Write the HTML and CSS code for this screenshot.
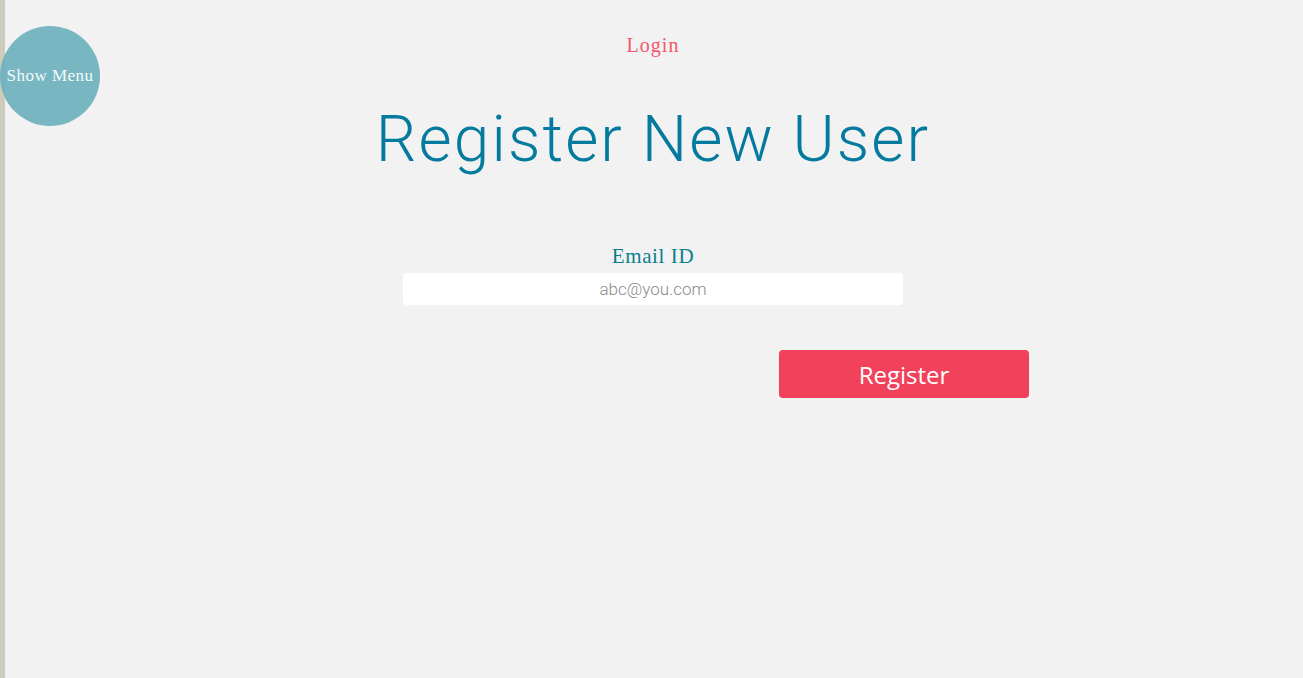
FILE: index.html
```html
<!DOCTYPE html>
<html>
<head>
<meta charset="utf-8">
<link rel="stylesheet" href="styles.css">
</head>
<body>
<div class="page">
  <button class="menu-toggle">Show Menu</button>
  <main class="content">
    <a class="login-link" href="#">Login</a>
    <h1 class="title">Register New User</h1>
    <form class="form">
      <label class="field-label" for="email">Email ID</label>
      <input class="field-input" id="email" type="text" placeholder="abc@you.com">
      <div class="actions">
        <button class="register-btn" type="button">Register</button>
      </div>
    </form>
  </main>
</div>
</body>
</html>
```
FILE: styles.css
```css
html, body {
  margin: 0;
  padding: 0;
  height: 100%;
}
body {
  background: #f2f2f2;
  font-family: "Liberation Serif", serif;
}
.page {
  min-height: 100%;
  border-left: 5px solid #cccdbf;
  box-sizing: border-box;
}
.menu-toggle {
  position: absolute;
  left: 0;
  top: 26px;
  width: 100px;
  height: 100px;
  border-radius: 50%;
  border: none;
  background: rgba(110, 178, 190, 0.92);
  color: #f4fafb;
  font-family: "Liberation Serif", serif;
  font-size: 17px;
  padding: 0;
  letter-spacing: 0.5px;
  white-space: nowrap;
}
.content {
  display: flex;
  flex-direction: column;
  align-items: center;
  padding-top: 33px;
  padding-right: 2px;
}
.login-link {
  color: #f4566b;
  text-decoration: none;
  font-size: 20px;
  line-height: 24px;
  letter-spacing: 1px;
}
.title {
  margin: 45px 0 0;
  font-family: "Roboto", sans-serif;
  font-weight: 300;
  font-size: 64px;
  line-height: 76px;
  color: #047a9e;
  letter-spacing: 2.1px;
}
.form {
  margin-top: 66px;
  width: 500px;
  display: flex;
  flex-direction: column;
  align-items: center;
}
.field-label {
  color: #0b7e8e;
  font-size: 21px;
  line-height: 24px;
  letter-spacing: 0.6px;
}
.field-input {
  margin-top: 5px;
  width: 500px;
  height: 32px;
  box-sizing: border-box;
  border: none;
  border-radius: 4px;
  background: #ffffff;
  text-align: center;
  font-family: "Roboto", sans-serif;
  font-weight: 300;
  font-size: 17px;
  outline: none;
}
.field-input::placeholder {
  color: #8a8a8a;
}
.actions {
  align-self: flex-start;
  margin-top: 45px;
  margin-left: 376px;
}
.register-btn {
  width: 250px;
  height: 48px;
  border: none;
  border-radius: 4px;
  background: #f2415a;
  color: #ffffff;
  font-family: "Open Sans", sans-serif;
  font-size: 24px;
  padding: 0;
}
```
